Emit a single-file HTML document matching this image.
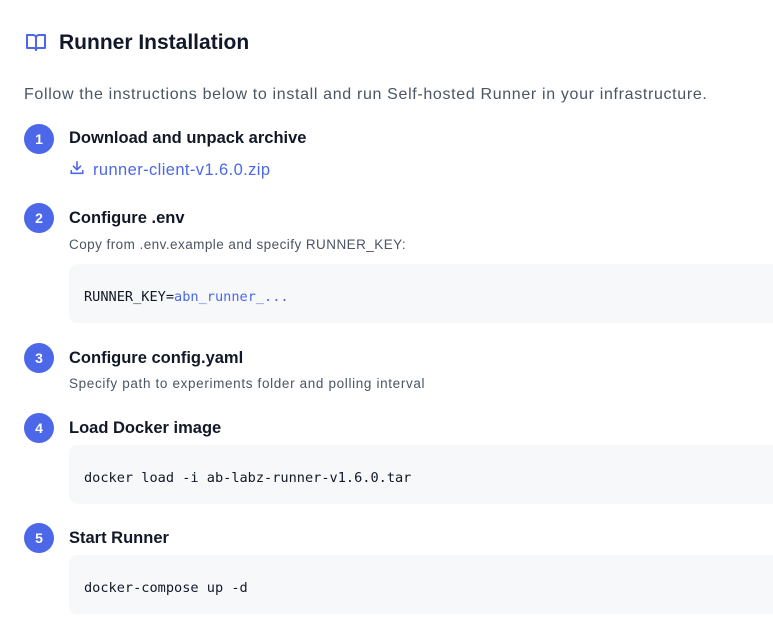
<!DOCTYPE html>
<html><head><meta charset="utf-8"><style>
*{margin:0;padding:0;box-sizing:border-box}
body{width:773px;height:638px;overflow:hidden;background:#fff;font-family:"Liberation Sans",sans-serif;color:#111827;position:relative}
.a{position:absolute;white-space:nowrap}
h1{position:absolute;left:59px;top:30px;font-size:21px;font-weight:600;line-height:26px;color:#111827}
.p{left:24px;top:84px;font-size:16px;color:#4b5563;line-height:22px;letter-spacing:0.66px}
.c{position:absolute;left:24px;width:30px;height:30px;border-radius:50%;background:#4c68e8;color:#fff;font-weight:700;font-size:14px;line-height:30px;text-align:center}
.t{left:69px;font-size:16.5px;font-weight:600;line-height:22px;color:#111827}
.s{left:69px;font-size:13.5px;color:#4b5563;line-height:18px;letter-spacing:0.45px}
.code{position:absolute;left:69px;width:720px;height:59px;background:#f7f8fa;border-radius:8px;font-family:"DejaVu Sans Mono",monospace;font-size:13.6px;line-height:59px;padding-left:15px;padding-top:4px;color:#111827;white-space:nowrap}
.lnk{left:69px;top:159px;font-size:16.5px;color:#4c68e8;line-height:22px;letter-spacing:0.4px}
</style></head><body>
<svg class="a" style="left:25px;top:32px" width="22" height="20" viewBox="0 0 22 20" fill="none" stroke="#4c68e8" stroke-width="2" stroke-linejoin="round"><path d="M2 3h6a3 3 0 0 1 3 3v12a2 2 0 0 0-2-2H2z"/><path d="M20 3h-6a3 3 0 0 0-3 3v12a2 2 0 0 1 2-2h7z"/></svg>
<h1>Runner Installation</h1>
<div class="a p">Follow the instructions below to install and run Self-hosted Runner in your infrastructure.</div>

<div class="c" style="top:124px">1</div>
<div class="a t" style="top:127px">Download and unpack archive</div>
<div class="a lnk"><svg width="16" height="16" viewBox="0 0 18 18" style="vertical-align:-1px;margin-right:8px" fill="none" stroke="#4c68e8" stroke-width="1.8" stroke-linecap="round" stroke-linejoin="round"><path d="M9 2v9M5 7l4 4 4-4M2.5 12v3h13v-3"/></svg>runner-client-v1.6.0.zip</div>

<div class="c" style="top:203px">2</div>
<div class="a t" style="top:207px">Configure .env</div>
<div class="a s" style="top:236px">Copy from .env.example and specify RUNNER_KEY:</div>
<div class="code" style="top:264px">RUNNER_KEY=<span style="color:#4c68e8">abn_runner_...</span></div>

<div class="c" style="top:343px">3</div>
<div class="a t" style="top:347px">Configure config.yaml</div>
<div class="a s" style="top:375px;letter-spacing:0.65px">Specify path to experiments folder and polling interval</div>

<div class="c" style="top:413px">4</div>
<div class="a t" style="top:417px">Load Docker image</div>
<div class="code" style="top:445px">docker load -i ab-labz-runner-v1.6.0.tar</div>

<div class="c" style="top:523px">5</div>
<div class="a t" style="top:527px">Start Runner</div>
<div class="code" style="top:555px">docker-compose up -d</div>
</body></html>
